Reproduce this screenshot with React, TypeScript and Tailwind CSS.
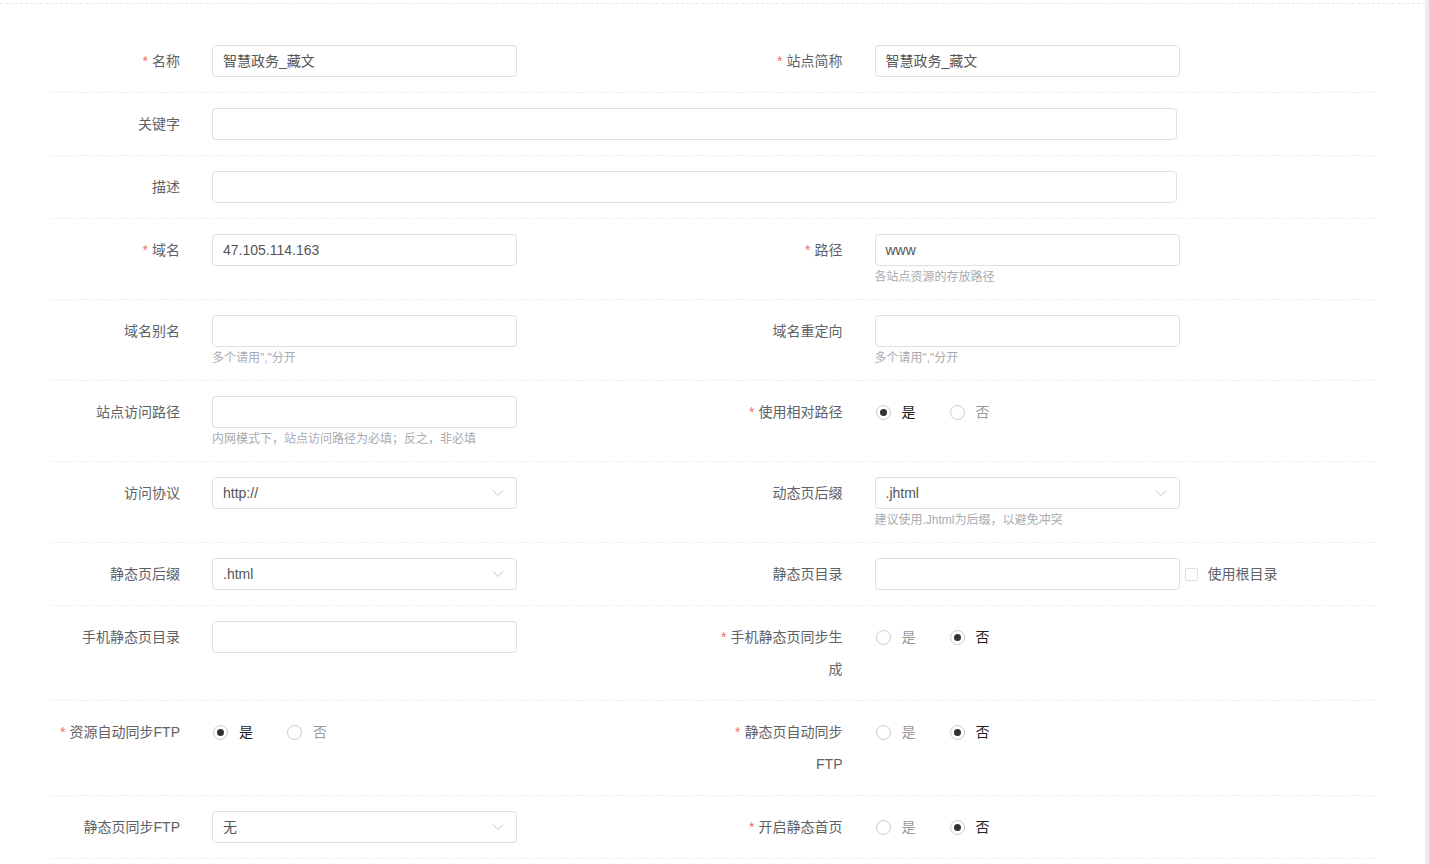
import type { ReactNode } from "react";

const FONT = { fontFamily: '"Liberation Sans", "Noto Sans CJK SC", sans-serif' };

function Label({ text, required }: { text: string; required?: boolean }) {
  return (
    <div className="w-[162px] shrink-0 pr-[32px] text-right text-[14px] leading-[32px] text-[#606266]">
      {required && <span className="mr-[4px] text-[#f56c6c]">*</span>}
      {text}
    </div>
  );
}

function Help({ text }: { text: string }) {
  return <div className="mt-[5px] text-[12px] leading-[13px] text-[#a8abb2]">{text}</div>;
}

function Input({ value, wide }: { value?: string; wide?: boolean }) {
  return (
    <div
      className={`${wide ? "w-[965px]" : "w-[305px]"} h-[32px] rounded-[4px] border border-[#dcdfe6] bg-white px-[10px] text-[14px] leading-[30px] text-[#555]`}
    >
      {value}
    </div>
  );
}

function Select({ value }: { value: string }) {
  return (
    <div className="flex h-[32px] w-[305px] items-center justify-between rounded-[4px] border border-[#dcdfe6] bg-white pl-[10px] pr-[12px] text-[14px] text-[#555]">
      <span>{value}</span>
      <svg width="12" height="8" viewBox="0 0 12 8" fill="none">
        <polyline points="1,1.5 6,6.5 11,1.5" stroke="#c0c4cc" strokeWidth="1" />
      </svg>
    </div>
  );
}

function Radio({ checked, label }: { checked?: boolean; label: string }) {
  return (
    <div className="mr-[34px] flex items-center">
      <span className="flex h-[15px] w-[15px] shrink-0 items-center justify-center rounded-full border border-[#c8ccd2] bg-white">
        {checked && <span className="h-[7px] w-[7px] rounded-full bg-[#333]" />}
      </span>
      <span className={`ml-[11px] text-[14px] ${checked ? "text-[#222]" : "text-[#999]"}`}>{label}</span>
    </div>
  );
}

function YesNo({ yes }: { yes: boolean }) {
  return (
    <div className="flex h-[32px] items-center pl-[1px]">
      <Radio checked={yes} label="是" />
      <Radio checked={!yes} label="否" />
    </div>
  );
}

function Item({
  label,
  required,
  children,
  help,
  full,
}: {
  label: string;
  required?: boolean;
  children: ReactNode;
  help?: string;
  full?: boolean;
}) {
  return (
    <div className={`flex ${full ? "w-full" : "w-[662.5px]"}`}>
      <Label text={label} required={required} />
      <div className="flex-1">
        {children}
        {help && <Help text={help} />}
      </div>
    </div>
  );
}

function Row({ children }: { children: ReactNode }) {
  return <div className="flex border-b border-dashed border-[#ebeef5] py-[15px]">{children}</div>;
}

export default function App() {
  return (
    <div className="flex h-[864px] w-full overflow-hidden bg-white" style={FONT}>
      <div className="w-[1425px] shrink-0">
        <div className="mt-[3px] border-t border-dashed border-[#e4e7ed]" />
        <div className="ml-[50px] mt-[26px] w-[1325px]">
          <Row>
            <Item label="名称" required>
              <Input value="智慧政务_藏文" />
            </Item>
            <Item label="站点简称" required>
              <Input value="智慧政务_藏文" />
            </Item>
          </Row>
          <Row>
            <Item label="关键字" full>
              <Input wide />
            </Item>
          </Row>
          <Row>
            <Item label="描述" full>
              <Input wide />
            </Item>
          </Row>
          <Row>
            <Item label="域名" required>
              <Input value="47.105.114.163" />
            </Item>
            <Item label="路径" required help="各站点资源的存放路径">
              <Input value="www" />
            </Item>
          </Row>
          <Row>
            <Item label="域名别名" help={'多个请用","分开'}>
              <Input />
            </Item>
            <Item label="域名重定向" help={'多个请用","分开'}>
              <Input />
            </Item>
          </Row>
          <Row>
            <Item label="站点访问路径" help="内网模式下，站点访问路径为必填；反之，非必填">
              <Input />
            </Item>
            <Item label="使用相对路径" required>
              <YesNo yes />
            </Item>
          </Row>
          <Row>
            <Item label="访问协议">
              <Select value="http://" />
            </Item>
            <Item label="动态页后缀" help="建议使用.Jhtml为后缀，以避免冲突">
              <Select value=".jhtml" />
            </Item>
          </Row>
          <Row>
            <Item label="静态页后缀">
              <Select value=".html" />
            </Item>
            <Item label="静态页目录">
              <div className="flex items-center">
                <Input />
                <span className="ml-[5px] h-[13px] w-[13px] rounded-[2px] border border-[#dcdfe6] bg-white" />
                <span className="ml-[10px] text-[14px] text-[#606266]">使用根目录</span>
              </div>
            </Item>
          </Row>
          <Row>
            <Item label="手机静态页目录">
              <Input />
            </Item>
            <Item label="手机静态页同步生成" required>
              <YesNo yes={false} />
            </Item>
          </Row>
          <Row>
            <Item label="资源自动同步FTP" required>
              <YesNo yes />
            </Item>
            <Item label="静态页自动同步FTP" required>
              <YesNo yes={false} />
            </Item>
          </Row>
          <Row>
            <Item label="静态页同步FTP">
              <Select value="无" />
            </Item>
            <Item label="开启静态首页" required>
              <YesNo yes={false} />
            </Item>
          </Row>
        </div>
      </div>
      <div className="flex-1 bg-[#e9ecf2]" />
    </div>
  );
}
